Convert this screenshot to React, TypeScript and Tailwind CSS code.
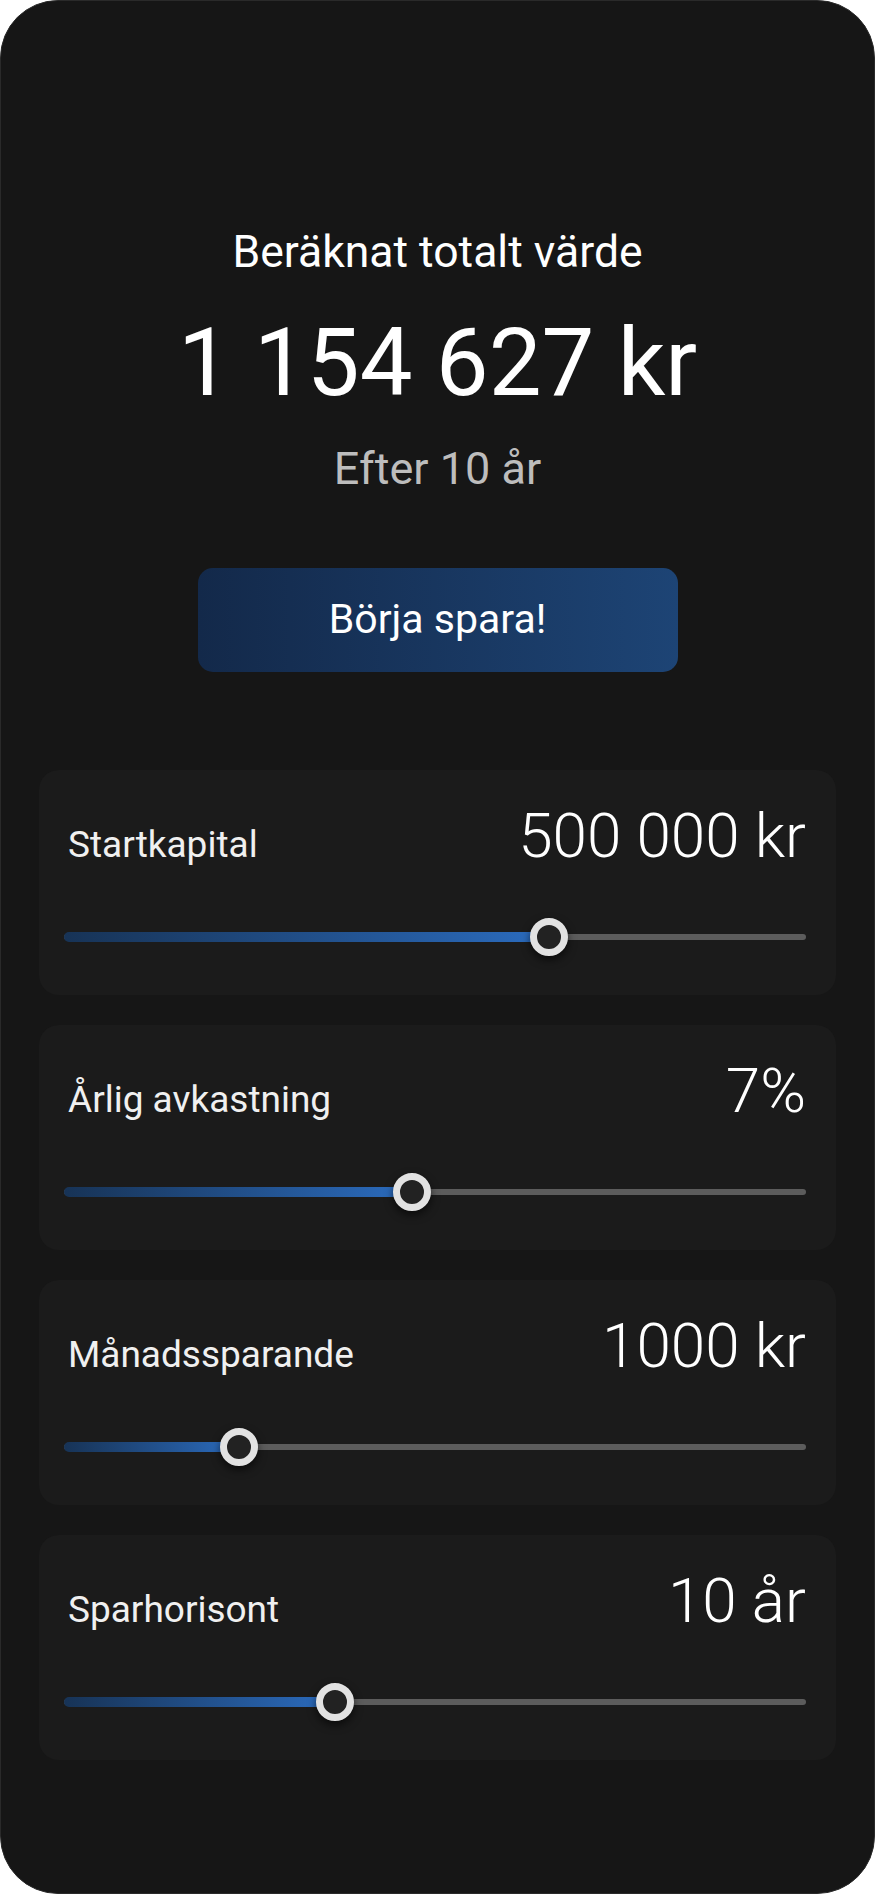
const sliders = [
  { label: 'Startkapital', value: '500 000 kr', pct: 65.4 },
  { label: 'Årlig avkastning', value: '7%', pct: 46.9 },
  { label: 'Månadssparande', value: '1000 kr', pct: 23.6 },
  { label: 'Sparhorisont', value: '10 år', pct: 36.5 },
]

const Slider = ({ pct }: { pct: number }) => (
  <div className="relative h-[38px] flex items-center">
    {/* track */}
    <div className="w-full h-[6px] rounded-full bg-[#5c5c5c]" />
    {/* fill */}
    <div
      className="absolute left-0 top-1/2 -translate-y-1/2 h-[10px] rounded-full bg-gradient-to-r from-[#173356] to-[#2b6cbf]"
      style={{ width: `${pct}%` }}
    />
    {/* thumb */}
    <div
      className="absolute top-0 w-[38px] h-[38px] -translate-x-1/2 rounded-full border-[7px] border-[#e2e2e2] bg-[#222222] shadow-[0_4px_8px_rgba(0,0,0,0.6)]"
      style={{ left: `${pct}%` }}
    />
  </div>
)

export default function App() {
  return (
    <div className="bg-white font-['Roboto',sans-serif]">
      <div className="h-[1894px] rounded-[58px] bg-[#161616] border border-[#2a2a2a] px-[38px] flex flex-col">
        {/* Result */}
        <div className="pt-[225px] flex flex-col items-center text-center">
          <h1 className="text-[44.5px] leading-[52px] text-white">Beräknat totalt värde</h1>
          <div className="mt-[38px] text-[94px] leading-[94px] text-white">1 154 627 kr</div>
          <div className="mt-[33px] text-[45px] leading-[52px] text-[#bdbdbd]">Efter 10 år</div>
          <button className="mt-[73px] w-[480px] h-[104px] rounded-[15px] bg-gradient-to-r from-[#13294a] to-[#1d4475] text-white text-[41px]">
            Börja spara!
          </button>
        </div>

        {/* Sliders */}
        <div className="mt-[98px] flex flex-col gap-[30px]">
          {sliders.map((s, i) => (
            <div key={i} className="h-[225px] rounded-[20px] bg-[#1b1b1b] pt-[36px] pl-[25px] pr-[30px]">
              <div className="flex items-baseline justify-between pl-[4px]">
                <span className="text-[37px] text-[#f0f0f0]">{s.label}</span>
                <span className="text-[62px] leading-[60px] font-light text-white">{s.value}</span>
              </div>
              <div className="mt-[45px]">
                <Slider pct={s.pct} />
              </div>
            </div>
          ))}
        </div>
      </div>
    </div>
  )
}
